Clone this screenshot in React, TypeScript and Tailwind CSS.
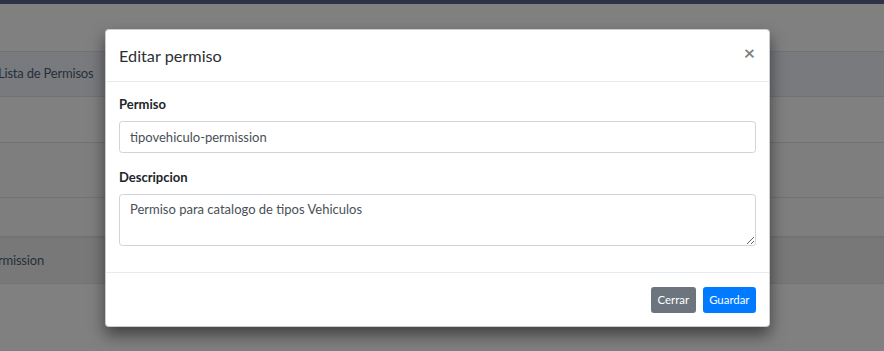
import React from "react";

const rows = [
  { h: "h-[45px]", bg: "bg-[#797a7e]", text: "Lista de Permisos", border: "border-b" },
  { h: "h-[46px]", bg: "bg-[#808080]", text: "", border: "border-b" },
  { h: "h-[55px]", bg: "bg-[#7e7e7e]", text: "", border: "border-b" },
  { h: "h-[40px]", bg: "bg-[#7e7e7e]", text: "", border: "border-b-2" },
  { h: "h-[46px]", bg: "bg-[#787878]", text: "rmission", border: "border-b" },
];

function Background() {
  return (
    <div className="flex h-[351px] w-[884px] flex-col bg-[#808080]">
      {/* top navbar */}
      <div className="h-[4px] bg-[#2f3246]" />
      <div className="h-[48px] border-b border-[#707274]" />
      {rows.map((r, i) => (
        <div
          key={i}
          className={[
            "-ml-[2px] flex items-center border-[#707274] text-[13px] tracking-[-0.2px] text-[#26303a]",
            r.h,
            r.bg,
            r.border,
          ].join(" ")}
        >
          {r.text}
        </div>
      ))}
    </div>
  );
}

export default function App() {
  return (
    <div
      className="relative h-[351px] w-[884px] overflow-hidden"
      style={{ fontFamily: "Lato, 'Liberation Sans', sans-serif" }}
    >
      <Background />

      {/* modal */}
      <div className="absolute inset-0 pl-[105px] pt-[29px]">
        <div className="w-[665px] rounded-[4px] border border-black/20 bg-white shadow-[0_8px_16px_rgba(0,0,0,0.5)]">
          <div className="flex h-[52px] items-center justify-between border-b border-[#e9ecef] pl-[13px] pr-[13px]">
            <h5 className="text-[16.25px] leading-[24px] text-[#2b2f33]">
              Editar permiso
            </h5>
            <button className="-mt-[6px] mr-[1px] text-[19.5px] font-bold leading-none text-black opacity-50">
              ×
            </button>
          </div>

          <div className="flex flex-col px-[13px] pt-[13px] pb-[13px]">
            <label className="mb-[6.5px] text-[13px] font-bold leading-[19.5px] text-[#212529]">
              Permiso
            </label>
            <input
              readOnly
              value="tipovehiculo-permission"
              className="h-[32px] rounded-[3.25px] border border-[#ced4da] px-[10px] text-[13px] text-[#495057] outline-none"
            />
            <label className="mb-[6.5px] mt-[15px] text-[13px] font-bold leading-[19.5px] text-[#212529]">
              Descripcion
            </label>
            <textarea
              readOnly
              rows={2}
              value="Permiso para catalogo de tipos Vehiculos"
              className="h-[52px] rounded-[3.25px] border border-[#ced4da] px-[10px] py-[5px] text-[13px] leading-[19.5px] text-[#495057] outline-none"
            />
            <div className="h-[13px]" />
          </div>

          <div className="flex h-[54px] items-center justify-end gap-[7px] border-t border-[#e9ecef] px-[13px]">
            <button className="h-[26px] rounded-[3px] bg-[#6c757d] px-[6.5px] text-[11.4px] text-white">
              Cerrar
            </button>
            <button className="h-[26px] rounded-[3px] bg-[#007bff] px-[6.5px] text-[11.4px] text-white">
              Guardar
            </button>
          </div>
        </div>
      </div>
    </div>
  );
}
